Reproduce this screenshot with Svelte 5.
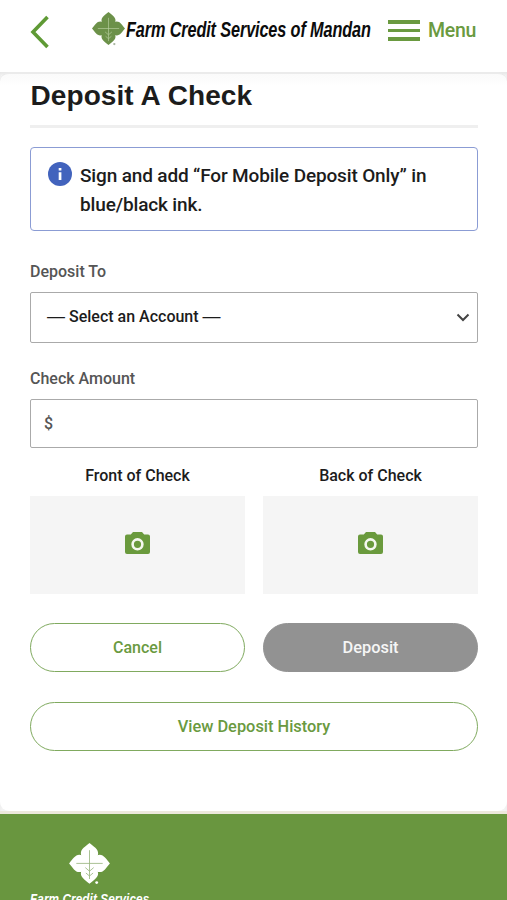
<script>
    const sides = ['Front of Check', 'Back of Check'];
    let amount = $state('');
</script>

{#snippet petals()}
    {#each [0, 90, 180, 270] as angle}
        <path
            transform="rotate({angle} 17 17)"
            d="M17 17C13 15.500 9.800 12 9.800 8.500 9.800 5 13.500 3 17 0c3.500 3 7.200 5 7.200 8.500 0 3.500-3.200 7-7.200 8.500z" />
    {/each}
    <path class="vein" d="M17 6v24M6 17h22M13.500 20.500l3.500 3 3.500-3M14 25l3 2.500 3-2.500" />
    <circle cx="23" cy="33" r="1.2" class="mark" />
{/snippet}

<div class="page">
    <header>
        <button class="back" aria-label="Back">
            <svg width="20" height="34" viewBox="0 0 20 34">
                <path d="M17.5 2 3 17l14.5 15" />
            </svg>
        </button>
        <div class="brand">
            <svg class="leaf" width="33" height="34" viewBox="0 0 34 35">{@render petals()}</svg>
            <svg class="wordmark" width="245" height="28" viewBox="0 0 245 28">
                <text x="0" y="21" transform="scale(0.74 1)" textLength="331">Farm Credit Services of Mandan</text>
            </svg>
        </div>
        <button class="menu">
            <span class="bars"><i></i><i></i><i></i></span>
            <span>Menu</span>
        </button>
    </header>

    <div class="backdrop">
        <main>
            <h1>Deposit A Check</h1>
            <div class="notice">
                <svg width="24" height="24" viewBox="0 0 24 24">
                    <circle cx="12" cy="12" r="12" />
                    <path d="M10.7 6h2.7v2.5h-2.7zM10.7 10.2h2.7V18h-2.7z" />
                </svg>
                <p>Sign and add “For Mobile Deposit Only” in<br />blue/black ink.</p>
            </div>

            <label class="to" for="account">Deposit To</label>
            <button id="account" class="field select">
                <span class="dash">—</span>
                <span>Select an Account</span>
                <span class="dash">—</span>
                <svg width="14" height="9" viewBox="0 0 14 9"><path d="m1.5 1.5 5.5 5.5 5.5-5.5" /></svg>
            </button>

            <label class="amount" for="amount">Check Amount</label>
            <div class="field money">
                <span>$</span>
                <input id="amount" type="text" bind:value={amount} />
            </div>

            <div class="photos">
                {#each sides as side}
                    <div class="photo">
                        <span>{side}</span>
                        <button aria-label={side}>
                            <svg width="25" height="23" viewBox="0 0 25 23">
                                <path d="M8 0h9l2.2 2.5H23a2 2 0 0 1 2 2V20a2 2 0 0 1-2 2H2a2 2 0 0 1-2-2V4.500a2 2 0 0 1 2-2h3.800z" />
                                <circle cx="12.500" cy="12.300" r="4.900" />
                            </svg>
                        </button>
                    </div>
                {/each}
            </div>

            <div class="actions">
                <button class="pill cancel">Cancel</button>
                <button class="pill deposit" disabled>Deposit</button>
            </div>
            <button class="pill history">View Deposit History</button>
        </main>
    </div>

    <footer>
        <svg class="leaf" width="41" height="42" viewBox="0 0 34 35">{@render petals()}</svg>
        <svg class="wordmark" width="120" height="20" viewBox="0 0 120 20">
            <text x="0" y="13" transform="scale(0.84 1)" textLength="142">Farm Credit Services</text>
        </svg>
    </footer>
</div>

<style>
    :global(body) {
        margin: 0;
        overflow: hidden;
    }

    .page {
        display: flex;
        flex-direction: column;
        height: 900px;
        overflow: hidden;
        background: #fff;
        color: #1c1c1c;
        font-family: Roboto, 'Liberation Sans', sans-serif;
        font-weight: 500;
    }

    .page * {
        box-sizing: border-box;
    }

    button,
    input {
        font: inherit;
        color: inherit;
        background: none;
        border: 0;
        padding: 0;
        margin: 0;
    }

    header {
        display: flex;
        flex: none;
        align-items: center;
        height: 72px;
        padding: 0 31px 11px 30px;
        background: #fff;
    }

    .back {
        width: 20px;
        height: 34px;
        margin-top: 2px;
    }

    .back path {
        fill: none;
        stroke: #5f9a35;
        stroke-width: 3.6;
    }

    svg {
        display: block;
        flex: none;
    }

    .brand {
        display: flex;
        align-items: center;
        margin-left: 42px;
    }

    .leaf {
        fill: #6c9149;
        overflow: visible;
    }

    .vein {
        fill: none;
        stroke: #b5cd9d;
        stroke-width: 0.7;
    }

    .brand .leaf {
        margin-top: -3px;
    }

    .brand .mark {
        fill: #a9b5a0;
    }

    .wordmark {
        margin-left: 1px;
        overflow: visible;
    }

    .brand .wordmark {
        margin-top: -2px;
    }

    .wordmark text {
        font: italic bold 22px 'Liberation Sans', sans-serif;
        fill: #0c0c0c;
    }

    .menu {
        display: flex;
        align-items: center;
        gap: 8px;
        margin-left: auto;
        color: #6a9a40;
        font-size: 19.500px;
        line-height: 24px;
        letter-spacing: -0.3px;
    }

    .bars {
        display: flex;
        flex-direction: column;
        gap: 5px;
        width: 32px;
    }

    .bars i {
        height: 3.600px;
        background: #6a9a40;
    }

    .backdrop {
        flex: none;
        height: 739px;
        background: #f3f3f3;
        box-shadow: inset 0 2px 2px #e8e8e8;
    }

    main {
        height: 739px;
        padding: 7px 29px 0 30px;
        border-top: 2px solid #ebebeb;
        border-radius: 9px;
        background: linear-gradient(#fafafa, #fff 12px);
    }

    h1 {
        height: 47px;
        margin: 0;
        border-bottom: 3px solid #efefef;
        font: bold 28px/30px 'Liberation Sans', sans-serif;
        letter-spacing: 0.08px;
        text-indent: 0.5px;
    }

    .notice {
        display: flex;
        gap: 8px;
        height: 84px;
        margin-top: 19px;
        padding: 14px 17px;
        border: 1.500px solid #8b9cd4;
        border-radius: 4px;
    }

    .notice circle {
        fill: #4263bd;
    }

    .notice path {
        fill: #fff;
    }

    .notice p {
        margin: -1px 0 0;
        font-size: 19px;
        line-height: 29px;
        letter-spacing: -0.15px;
        white-space: nowrap;
    }

    label {
        display: block;
        height: 20px;
        color: #555;
        font-size: 16px;
        line-height: 20px;
    }

    .to {
        margin-top: 31px;
    }

    .amount {
        margin-top: 26px;
    }

    .field {
        display: flex;
        align-items: center;
        border: 1px solid #aaa;
        border-radius: 2px;
    }

    .select {
        gap: 4px;
        width: 100%;
        height: 51px;
        margin-top: 10px;
        padding: 0 7px 2px 16px;
        font-size: 16px;
    }

    .dash {
        font-family: 'Liberation Sans', sans-serif;
        font-size: 18px;
        font-weight: normal;
    }

    .select svg {
        margin: 2px 0 0 auto;
    }

    .select path {
        fill: none;
        stroke: #444;
        stroke-width: 2;
    }

    .money {
        height: 49px;
        margin-top: 10px;
        padding: 0 13px;
        color: #555;
        font-size: 16px;
    }

    .money input {
        flex: 1;
        outline: none;
    }

    .photos,
    .actions {
        display: grid;
        grid-template-columns: 1fr 1fr;
        gap: 18px;
    }

    .photos {
        margin-top: 18px;
    }

    .photo {
        display: flex;
        flex-direction: column;
        gap: 10px;
        text-align: center;
    }

    .photo span {
        height: 20px;
        font-size: 16px;
        line-height: 20px;
    }

    .photo button {
        display: grid;
        place-items: center;
        height: 98px;
        padding-bottom: 3px;
        background: #f5f5f5;
    }

    .photo path {
        fill: #6a9a3d;
    }

    .photo circle {
        fill: none;
        stroke: #f5f8f0;
        stroke-width: 2.600;
    }

    .actions {
        margin-top: 29px;
    }

    .pill {
        height: 49px;
        border: 1.500px solid #80aa5f;
        border-radius: 25px;
        color: #6a9a40;
        font-size: 16.400px;
    }

    .cancel {
        font-size: 16px;
    }

    .deposit {
        border-color: #929292;
        background: #929292;
        color: #f6f6f6;
    }

    .history {
        width: 100%;
        margin-top: 30px;
    }

    footer {
        flex: 1;
        padding: 29px 30px 0;
        border-top: 3px solid #ece8dc;
        background: #69963f;
    }

    footer .leaf {
        margin-left: 39px;
        fill: #fff;
    }

    footer .vein {
        stroke: #9ab681;
    }

    footer .wordmark {
        margin: 6px 0 0;
    }

    footer .wordmark text {
        font-size: 14px;
        fill: #fff;
    }
</style>
